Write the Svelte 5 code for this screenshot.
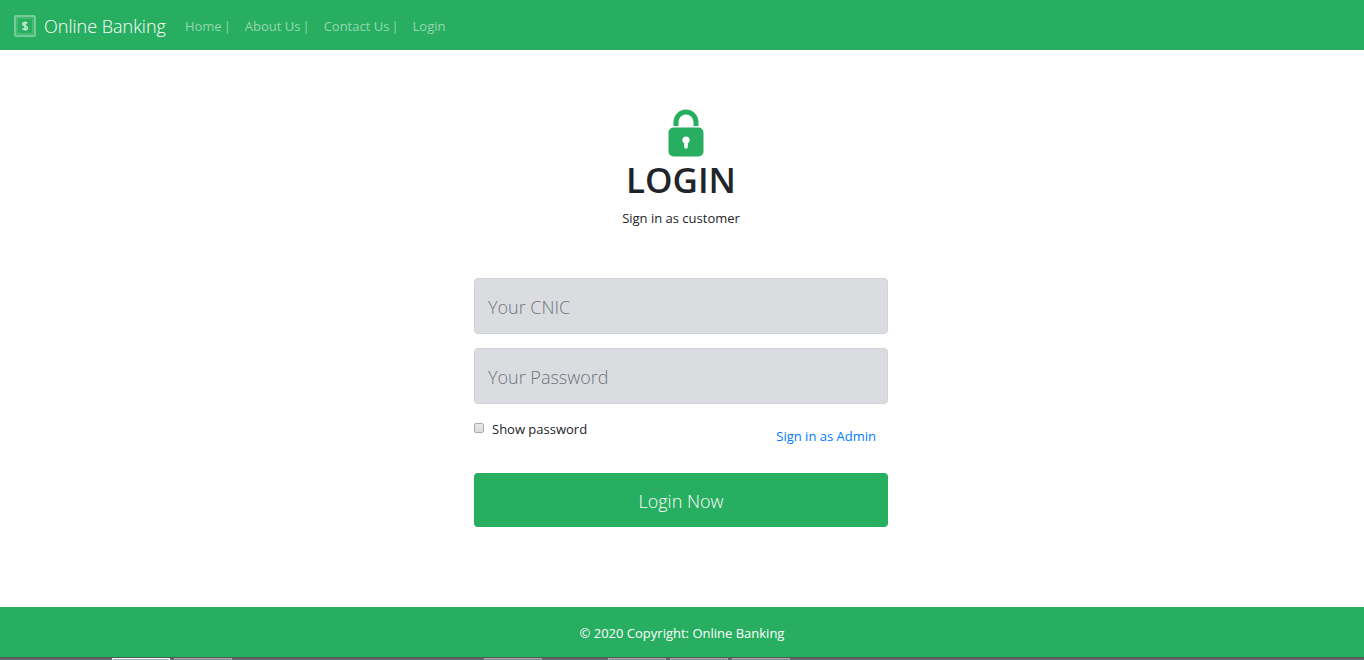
<script>
  let cnic = $state('');
  let password = $state('');
  let show = $state(false);
  const links = ['Home', 'About Us', 'Contact Us', 'Login'];
  const tasks = [true, true, false, false, false, false, true, false, true, true, true];
</script>

<div class="page">
  <header>
    <a class="brand" href="#home">
      <svg width="22" height="22" viewBox="0 0 22 22" aria-hidden="true">
        <rect x="1" y="1" width="20" height="20" rx="1" fill="#43b873" stroke="#74cb98" stroke-width="2" />
        <rect x="3.5" y="3.5" width="15" height="15" fill="#28ae60" stroke="#5dbf85" stroke-dasharray="1 1" />
        <path d="M13.3 8.4C12.8 7.6 12 7.4 11 7.4c-1.3 0-2.3.6-2.3 1.7 0 2.5 4.7 1.2 4.7 3.8 0 1.1-1 1.8-2.4 1.8-1.2 0-2.1-.4-2.6-1.3M11 6.5v9" fill="none" stroke="#c5ead4" stroke-width="1.5" />
      </svg>
      <span>Online Banking</span>
    </a>
    <nav aria-label="Main">
      {#each links as link, i}
        <a href="#top"><span>{link}</span>{#if i < links.length - 1}<span>|</span>{/if}</a>
      {/each}
    </nav>
  </header>

  <main>
    <form onsubmit={(e) => e.preventDefault()}>
      <div class="intro">
        <svg class="lock" width="46" height="48" viewBox="0 0 46 48" aria-hidden="true">
          <g transform="translate(10 0)">
            <path d="M8 17v-4a10 10 0 0 1 20 0v4" fill="none" stroke="#28ae60" stroke-width="5" />
            <rect x="0.5" y="18.5" width="35" height="29" rx="5" fill="#28ae60" />
            <circle cx="18" cy="31" r="3.6" fill="#fff" />
            <path d="M16.2 32h3.6v6a1.8 1.8 0 0 1-3.6 0z" fill="#fff" />
          </g>
        </svg>
        <h1>LOGIN</h1>
        <p>Sign in as customer</p>
      </div>
      <input class="field" type="text" aria-label="Your CNIC" placeholder="Your CNIC" bind:value={cnic} />
      <input class="field" type={show ? 'text' : 'password'} aria-label="Your Password" placeholder="Your Password" bind:value={password} />
      <div class="options">
        <label><input type="checkbox" bind:checked={show} />Show password</label>
        <a href="#admin">Sign in as Admin</a>
      </div>
      <button type="submit">Login Now</button>
    </form>
  </main>

  <footer>© 2020 Copyright: Online Banking</footer>
  <div class="taskbar" aria-hidden="true">
    {#each tasks as open, i}<span class:open class:active={i === 0}></span>{/each}
  </div>
</div>

<style>
  .page {
    min-height: 100vh;
    display: flex;
    flex-direction: column;
    background: #fff;
    color: #212529;
    font-family: "Open Sans", "Noto Sans", sans-serif;
    font-size: 13px;
    line-height: 20px;
  }
  .page, .page * { box-sizing: border-box; }
  a { text-decoration: none; }
  header {
    display: flex;
    align-items: center;
    gap: 12px;
    min-height: 50px;
    padding: 2px 14px 0;
    background: #28ae60;
  }
  .brand {
    display: flex;
    align-items: center;
    gap: 8px;
    color: #fff;
    font-size: 18px;
    font-weight: 300;
    line-height: 24px;
  }
  nav { display: flex; }
  nav a { display: flex; gap: 2px; padding: 0 7px; color: #94d7b0; }
  main {
    flex: 1;
    padding: 59px 18px 48px 16px;
  }
  form {
    display: flex;
    flex-direction: column;
    max-width: 414px;
    margin: 0 auto;
  }
  .intro { text-align: center; margin-bottom: 50px; }
  .lock { display: block; margin: 0 auto; }
  h1 {
    margin: 0 0 5px;
    font-size: 35px;
    font-weight: 600;
    line-height: 46px;
  }
  p { margin: 0; }
  .field {
    width: 100%;
    height: 56px;
    margin-bottom: 14px;
    padding: 2px 13px 0;
    border: 1px solid #ced4da;
    border-radius: 4px;
    background: #dbdce0;
    color: #495057;
    font: 300 18px/27px "Open Sans", "Noto Sans", sans-serif;
  }
  .field::placeholder { color: #6c757d; opacity: 1; }
  .options {
    display: flex;
    justify-content: space-between;
    align-items: flex-start;
    padding: 1px 12px 0 0;
    margin-bottom: 27px;
  }
  .options label { display: flex; align-items: center; gap: 8px; color: #212529; }
  .options input {
    appearance: none;
    width: 10px;
    height: 10px;
    margin: 0 0 2px;
    border: 1px solid #a9a9a9;
    border-radius: 2px;
    background: linear-gradient(#e8e8e8, #dcdcdc);
  }
  .options input:checked { background: #28ae60; }
  .options a { margin-top: 7px; color: #007bff; }
  button {
    width: 100%;
    height: 54px;
    padding: 2px 12px 0;
    border: 0;
    border-radius: 4px;
    background: #28ae60;
    color: #fff;
    font: 300 18px/27px "Open Sans", "Noto Sans", sans-serif;
  }
  footer {
    padding: 16px 16px 14px;
    background: #28ae60;
    color: #fff;
    text-align: center;
  }
  .taskbar {
    display: flex;
    gap: 4px;
    height: 3px;
    padding: 0 112px;
    border-top: 1px solid #4c5a50;
    background: #666;
  }
  .taskbar span { width: 58px; }
  .taskbar .open { border: solid #aaa; border-width: 1px 1px 0; background: #858585; }
  .taskbar .active { border-color: #fff; background: #aaa; }
</style>
